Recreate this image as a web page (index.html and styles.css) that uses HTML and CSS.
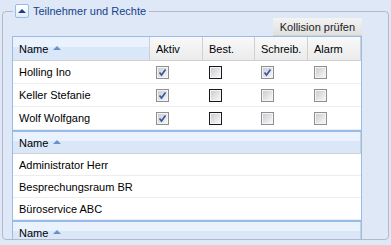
FILE: index.html
```html
<!DOCTYPE html>
<html>
<head>
    <title>Teilnehmer und Rechte</title>
    <link rel="stylesheet" href="styles.css">
</head>
<body>
    <div class="panel">
        <!-- collapsible legend -->
        <div class="legend">
            <span class="toggle"><span class="toggle-arrow"></span></span>
            <span class="legend-text">Teilnehmer und Rechte</span>
        </div>

        <div class="panel-body">
            <div class="toolbar">
                <button class="btn">Kollision prüfen</button>
            </div>

            <!-- participants with rights -->
            <div class="grid">
                <div class="grid-head rights">
                    <div class="hcell sorted">Name <span class="sort-arrow"></span></div>
                    <div class="hcell">Aktiv</div>
                    <div class="hcell">Best.</div>
                    <div class="hcell">Schreib.</div>
                    <div class="hcell">Alarm</div>
                </div>
                <div class="row rights">
                    <div class="cell">Holling Ino</div>
                    <div class="cell"><span class="cb checked"></span></div>
                    <div class="cell"><span class="cb dark"></span></div>
                    <div class="cell"><span class="cb checked"></span></div>
                    <div class="cell"><span class="cb"></span></div>
                </div>
                <div class="row rights">
                    <div class="cell">Keller Stefanie</div>
                    <div class="cell"><span class="cb checked"></span></div>
                    <div class="cell"><span class="cb dark"></span></div>
                    <div class="cell"><span class="cb"></span></div>
                    <div class="cell"><span class="cb"></span></div>
                </div>
                <div class="row rights">
                    <div class="cell">Wolf Wolfgang</div>
                    <div class="cell"><span class="cb checked"></span></div>
                    <div class="cell"><span class="cb dark"></span></div>
                    <div class="cell"><span class="cb"></span></div>
                    <div class="cell"><span class="cb"></span></div>
                </div>
            </div>

            <!-- available resources -->
            <div class="grid">
                <div class="grid-head small">
                    <div class="hcell sorted">Name <span class="sort-arrow"></span></div>
                </div>
                <div class="row small"><div class="cell">Administrator Herr</div></div>
                <div class="row small"><div class="cell">Besprechungsraum BR</div></div>
                <div class="row small"><div class="cell">Büroservice ABC</div></div>
            </div>

            <div class="grid">
                <div class="grid-head small">
                    <div class="hcell sorted">Name <span class="sort-arrow"></span></div>
                </div>
            </div>
        </div>
    </div>
</body>
</html>
```

FILE: styles.css
```css
body {
    margin: 0;
    background-color: #dfe8f6;
    font-family: "Liberation Sans", Arial, sans-serif;
    font-size: 11px;
    color: #000;
}
.panel {
    margin: 11px 2px 0;
    padding: 0 26px 0 9px;
    border: 1px solid #b5b8c8;
    border-radius: 4px;
}
.panel-body {
    height: 221px;
    overflow: hidden;
}
.legend {
    display: flex;
    align-items: center;
    width: fit-content;
    height: 14px;
    margin: -8px 0 0 1px;
    padding: 0 3px 0 2px;
    background-color: #dfe8f6;
}
.toggle {
    display: flex;
    align-items: center;
    justify-content: center;
    box-sizing: border-box;
    width: 14px;
    height: 14px;
    border: 1px solid #99bbe8;
    border-radius: 2px;
    background: linear-gradient(#ffffff, #e4ecf7);
}
.toggle-arrow {
    width: 0;
    height: 0;
    border-left: 4px solid transparent;
    border-right: 4px solid transparent;
    border-bottom: 4px solid #15428b;
}
.legend-text {
    margin-left: 4px;
    color: #15428b;
    font-size: 11px;
}
.toolbar {
    display: flex;
    justify-content: flex-end;
}
.btn {
    height: 18px;
    padding: 0 7px;
    border: none;
    border-bottom: 1px solid #d2d2d2;
    background: linear-gradient(#f3f3f3, #e0e0e0);
    font-family: "Liberation Sans", Arial, sans-serif;
    font-size: 11px;
    color: #222;
}
.grid {
    border: 1px solid #99bbe8;
    background-color: #fff;
}
.grid-head, .row {
    display: grid;
}
.rights {
    grid-template-columns: 137px 53px 52px 53px 53px;
}
.small {
    grid-template-columns: 1fr;
}
.grid-head {
    height: 23px;
    border-bottom: 1px solid #d0d0d0;
}
.grid-head.small {
    height: 21px;
}
.hcell {
    display: flex;
    align-items: center;
    padding: 0 6px;
    border-right: 1px solid #d0d0d0;
    background: linear-gradient(#f9f9f9, #ebebeb);
}
.hcell.sorted {
    background: linear-gradient(#e9f2fd 45%, #d9e7f9 45%);
}
.sort-arrow {
    width: 0;
    height: 0;
    margin: 0 0 2px 5px;
    border-left: 4px solid transparent;
    border-right: 4px solid transparent;
    border-bottom: 4px solid #6a90cc;
}
.row {
    height: 22px;
    border-bottom: 1px solid #ededed;
}
.row.small {
    height: 21px;
}
.cell {
    display: flex;
    align-items: center;
    padding: 0 6px;
}
.cb {
    box-sizing: border-box;
    width: 13px;
    height: 13px;
    border: 1px solid #8f8f8f;
    box-shadow: inset 0 0 0 1px #f4f4f4;
    background: linear-gradient(135deg, #c5c9cf, #fbfbfb);
}
.cb.dark {
    border-color: #1a1a1a;
}
.cb.checked {
    background: url("data:image/svg+xml,%3Csvg xmlns='http://www.w3.org/2000/svg' width='11' height='11'%3E%3Cpath d='M2.5 5.5 L4.5 8 L8.5 2.5' fill='none' stroke='%233b57a6' stroke-width='1.7'/%3E%3C/svg%3E") center no-repeat, linear-gradient(135deg, #c5c9cf, #fbfbfb);
}
```
